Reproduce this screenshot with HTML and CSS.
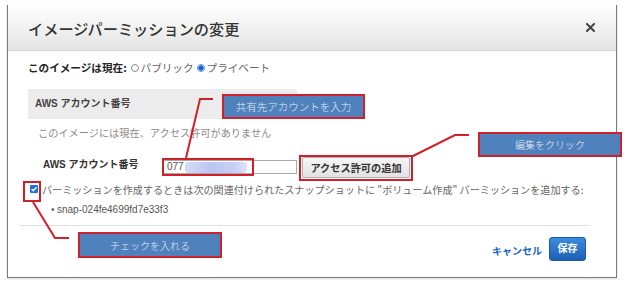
FILE: index.html
```html
<!DOCTYPE html>
<html lang="ja">
<head>
<meta charset="utf-8">
<title>イメージパーミッションの変更</title>
<link rel="stylesheet" href="styles.css">
</head>
<body>
<div class="dialog">
  <div class="dlg-head">
    <h1 class="dlg-title">イメージパーミッションの変更</h1>
    <span class="dlg-close"><svg width="9" height="9" viewBox="0 0 9 9"><path d="M1 1 L8 8 M8 1 L1 8" stroke="#444" stroke-width="2" stroke-linecap="square"/></svg></span>
  </div>
  <div class="dlg-body">
    <div class="status">
      <b class="status-label">このイメージは現在:</b>
      <span class="radio"></span><span class="opt">パブリック</span>
      <span class="radio on"></span><span class="opt">プライベート</span>
    </div>
    <div class="band">AWS アカウント番号</div>
    <div class="empty">このイメージには現在、アクセス許可がありません</div>
    <div class="add-row">
      <span class="row-label">AWS アカウント番号</span>
      <div class="input"><span class="val">077</span><span class="mask"></span></div>
      <button class="add-btn">アクセス許可の追加</button>
    </div>
    <div class="check-row">
      <span class="checkbox"><svg width="8" height="8" viewBox="0 0 8 8"><path d="M1.6 4.1 L3.3 5.8 L6.5 2.2" fill="none" stroke="#fff" stroke-width="1.4"/></svg></span>
      <span class="check-text">パーミッションを作成するときは次の関連付けられたスナップショットに "ボリューム作成" パーミッションを追加する:</span>
    </div>
    <ul class="snaps"><li>snap-024fe4699fd7e33f3</li></ul>
    <div class="divider"></div>
    <div class="footer">
      <a class="cancel">キャンセル</a>
      <button class="save">保存</button>
    </div>
  </div>
</div>

<div class="annot-layer">
  <svg class="annot-lines" width="640" height="288" viewBox="0 0 640 288">
    <polyline points="213,99 200,99 186,158" fill="none" stroke="#d0212b" stroke-width="2"/>
    <polyline points="411,157 455,135 469,135" fill="none" stroke="#d0212b" stroke-width="2"/>
    <polyline points="33,202 55,238 69,238" fill="none" stroke="#d0212b" stroke-width="2"/>
  </svg>
  <div class="mark mark-input"></div>
  <div class="mark mark-btn"></div>
  <div class="mark mark-check"></div>
  <div class="callout callout-share">共有先アカウントを入力</div>
  <div class="callout callout-edit">編集をクリック</div>
  <div class="callout callout-check">チェックを入れる</div>
</div>
</body>
</html>
```

FILE: styles.css
```css
* { box-sizing: border-box; }

html, body {
  margin: 0;
  padding: 0;
  background: #fff;
}

body {
  width: 640px;
  height: 288px;
  overflow: hidden;
  position: relative;
  font-family: "Liberation Sans", "Noto Sans CJK JP", sans-serif;
  font-size: 10px;
  color: #555;
}

.dialog {
  margin: 5px 0 0 7px;
  width: 610px;
  height: 273px;
  border: 1px solid #7a7a7a;
  border-top: none;
  box-shadow: 0 1px 2px rgba(0, 0, 0, 0.15);
  background: #fff;
}

.dlg-head {
  height: 46px;
  display: flex;
  align-items: center;
  justify-content: space-between;
  padding: 0 21px 0 20px;
  background: linear-gradient(#ffffff, #e4e4e4);
  border-bottom: 1px solid #d6d6d6;
}

.dlg-title {
  margin: 0;
  font-family: "Noto Sans CJK JP", sans-serif;
  font-size: 15.2px;
  font-weight: 500;
  color: #333;
  line-height: 20px;
}

.dlg-close {
  display: flex;
  width: 9px;
  height: 9px;
}

.dlg-body {
  padding: 10px 20px 16px;
}

.status {
  height: 14px;
  line-height: 14px;
  display: flex;
  align-items: center;
  font-family: "Noto Sans CJK JP", sans-serif;
  font-size: 10.6px;
  color: #666;
}

.status-label {
  color: #222;
  font-weight: 700;
  margin-right: 4px;
}

.radio {
  width: 8px;
  height: 8px;
  border-radius: 50%;
  border: 1px solid #888;
  background: #fff;
  margin-right: 2px;
}

.radio.on {
  margin-left: 3px;
  border-color: #5a8fd8;
  background: radial-gradient(circle, #1666d6 0 2.4px, #fff 2.9px);
}

.band {
  margin-top: 14px;
  width: 269px;
  height: 30px;
  line-height: 30px;
  padding-left: 7px;
  background: #ececec;
  font-weight: 700;
  color: #444;
}

.empty {
  margin-top: 7px;
  height: 14px;
  line-height: 14px;
  padding-left: 10px;
  color: #8a8a8a;
  font-family: "Noto Sans CJK JP", sans-serif;
  font-size: 10.2px;
}

.add-row {
  margin-top: 15px;
  height: 24px;
  display: flex;
  align-items: center;
}

.row-label {
  width: 135px;
  padding-left: 15px;
  padding-bottom: 7px;
  font-weight: 700;
  color: #333;
}

.input {
  width: 134px;
  height: 14px;
  border: 1px solid #a9a9a9;
  display: flex;
  align-items: center;
  padding-left: 3px;
  background: #fff;
  color: #555;
}

.val {
  line-height: 12px;
}

.mask {
  width: 62px;
  height: 11px;
  margin-left: 1px;
  border-radius: 3px;
  background: linear-gradient(90deg, #d7dcf7, #bcc6f2 40%, #c6cff5 80%, #dfe3f8);
  filter: blur(0.6px);
}

.add-btn {
  margin-left: 5px;
  width: 108px;
  height: 21px;
  padding: 0;
  border: 1px solid #b0b0b0;
  border-radius: 2px;
  background: linear-gradient(#f6f6f6, #e2e2e2);
  font-family: "Noto Sans CJK JP", sans-serif;
  font-size: 10.2px;
  font-weight: 700;
  color: #333;
}

.check-row {
  margin-top: 3px;
  height: 14px;
  display: flex;
  align-items: center;
  font-family: "Noto Sans CJK JP", sans-serif;
  font-size: 10.1px;
  color: #666;
}

.checkbox {
  margin-left: 2px;
  width: 8px;
  height: 8px;
  border-radius: 1px;
  background: #1f6fd6;
  display: flex;
  margin-right: 4px;
}

.snaps {
  margin: 7px 0 0;
  padding: 0 0 0 23px;
  list-style: none;
  height: 14px;
  line-height: 14px;
  color: #555;
}

.snaps li::before {
  content: "•";
  display: inline-block;
  width: 6px;
  color: #666;
}

.divider {
  margin: 8px 0 0 -8px;
  width: 570px;
  height: 1px;
  background: #e2e2e2;
}

.footer {
  margin-top: 11px;
  height: 24px;
  display: flex;
  justify-content: flex-end;
  align-items: center;
  padding-right: 10px;
}

.cancel {
  font-family: "Noto Sans CJK JP", sans-serif;
  font-size: 10px;
  font-weight: 700;
  color: #1c64c4;
  margin-right: 7px;
  padding-top: 3px;
}

.save {
  width: 37px;
  height: 24px;
  padding: 0 0 3px;
  border: 1px solid #1b5aa8;
  border-radius: 3px;
  background: linear-gradient(#3c8ade, #1d60b6);
  font-family: "Noto Sans CJK JP", sans-serif;
  font-size: 10px;
  font-weight: 700;
  color: #fff;
}

/* annotation overlay */
.annot-layer {
  position: absolute;
  left: 0;
  top: 0;
  width: 640px;
  height: 288px;
  pointer-events: none;
}

.annot-lines {
  position: absolute;
  left: 0;
  top: 0;
}

.mark {
  position: absolute;
  border: 2px solid #d0212b;
}

.mark-input { left: 162px; top: 158px; width: 92px; height: 18px; }
.mark-btn { left: 299px; top: 155px; width: 114px; height: 26px; }
.mark-check { left: 23px; top: 181px; width: 18px; height: 21px; }

.callout {
  position: absolute;
  display: flex;
  align-items: center;
  justify-content: center;
  border: 2px solid #d0212b;
  background: #4f81bd;
  color: #e4ebf6;
  font-family: "Noto Sans CJK JP", sans-serif;
  font-size: 10.5px;
  font-weight: 300;
}

.callout-share { left: 222px; top: 94px; width: 143px; height: 25px; }
.callout-edit { left: 478px; top: 132px; width: 144px; height: 25px; font-size: 10px; }
.callout-check { left: 78px; top: 232px; width: 144px; height: 26px; font-size: 10px; }
```
